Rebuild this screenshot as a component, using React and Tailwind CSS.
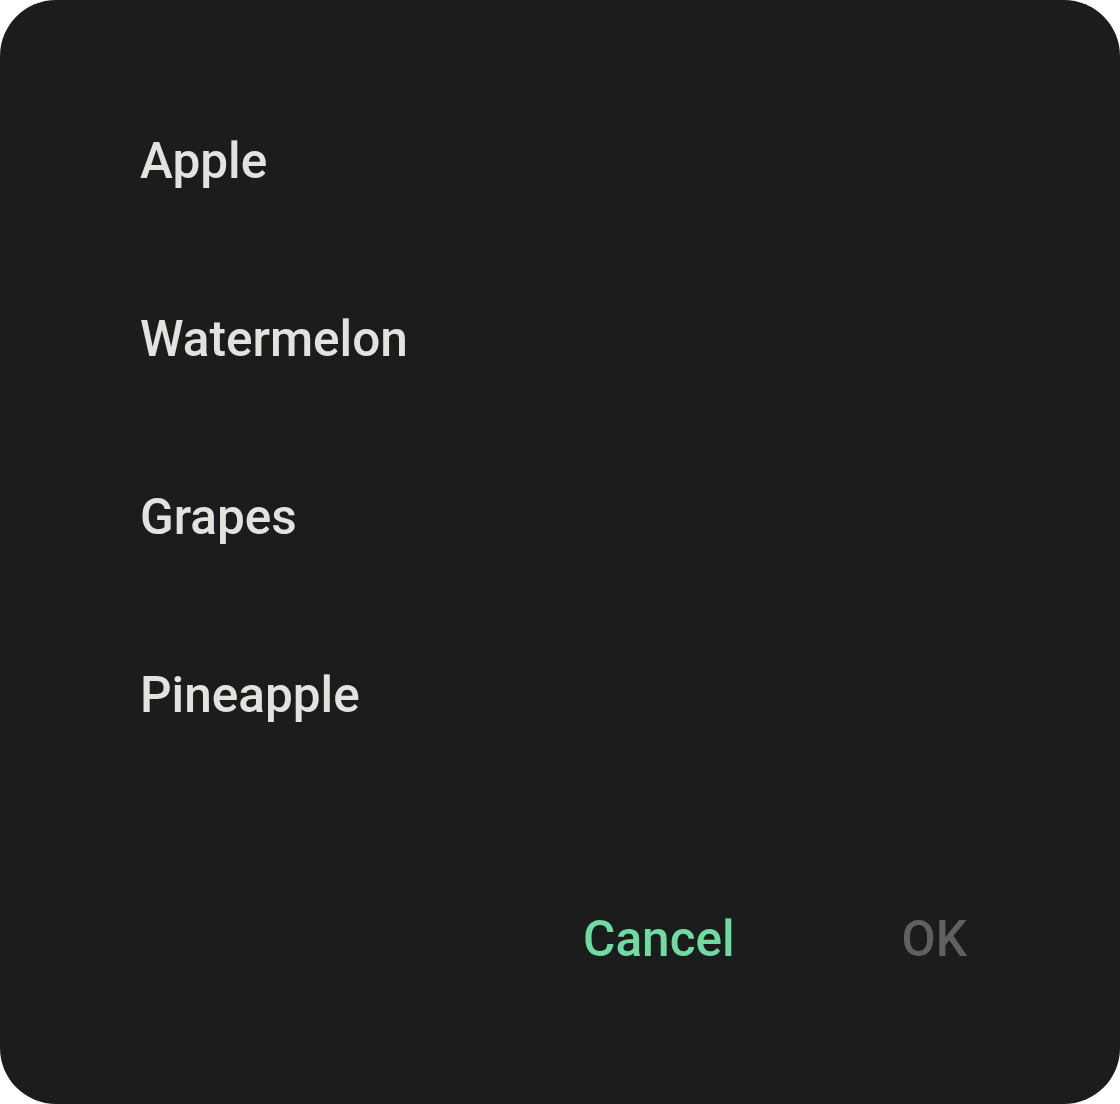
export default function App() {
  const items = ["Apple", "Watermelon", "Grapes", "Pineapple"];
  return (
    <div className="w-[1120px] h-[1104px] bg-white" style={{ fontFamily: "Roboto, 'Noto Sans', sans-serif" }}>
      <div className="w-full h-full rounded-[56px] bg-[#1b1d1c] flex flex-col pt-[72px]">
        <ul className="flex flex-col">
          {items.map((t) => (
            <li key={t} className="h-[178px] leading-[178px] pl-[140px] text-[49.5px] font-medium text-[#e1e3df]">
              {t}
            </li>
          ))}
        </ul>
        <div className="flex justify-end items-center mt-[120px] pr-[153px] gap-[167px] text-[49.5px] font-medium leading-[70px]">
          <span className="text-[#6fdba2]">Cancel</span>
          <span className="text-[#5f615f]">OK</span>
        </div>
      </div>
    </div>
  );
}
